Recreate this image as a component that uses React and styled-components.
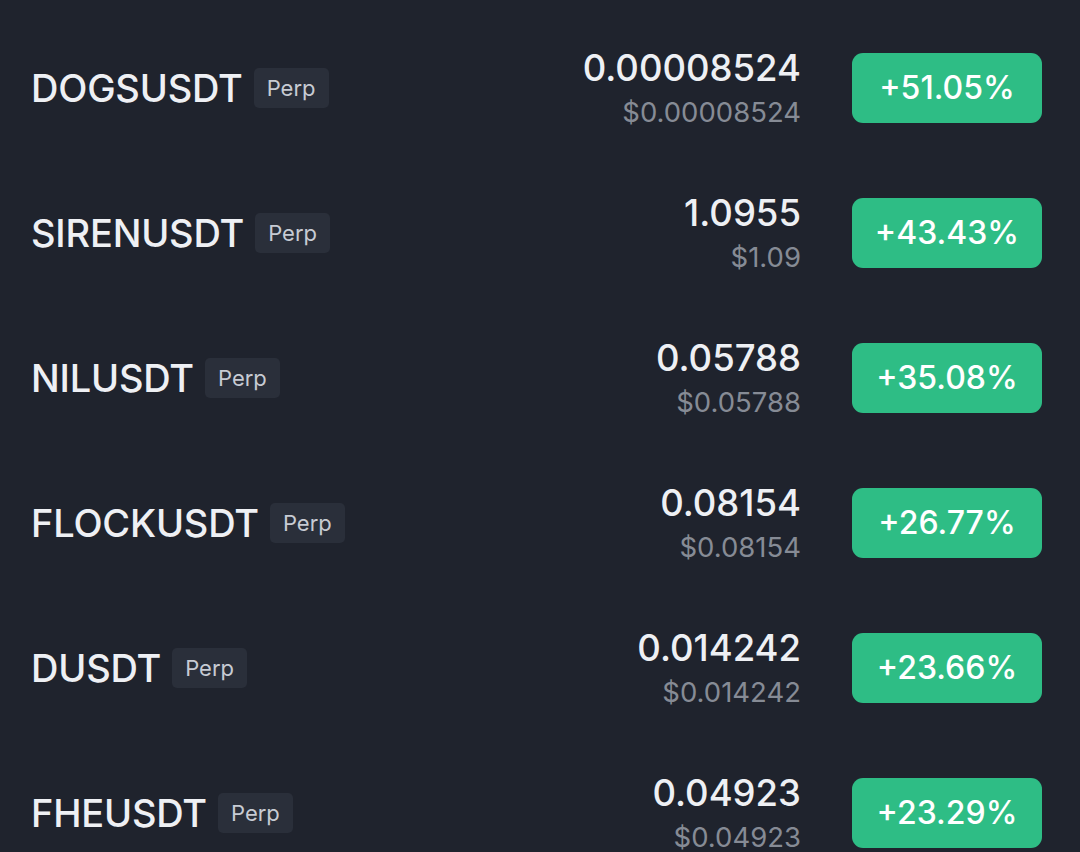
import React from "react";
import styled, { createGlobalStyle } from "styled-components";

const Global = createGlobalStyle`
  html, body { margin: 0; padding: 0; background: #1f232d; }
  body { font-family: Inter, "Open Sans", sans-serif; -webkit-font-smoothing: antialiased; }
`;

const List = styled.div`
  width: 1080px;
  height: 852px;
  overflow: hidden;
  background: #1f232d;
  padding: 15px 38px 0 31px;
  box-sizing: border-box;
  display: flex;
  flex-direction: column;
`;

const Row = styled.div`
  height: 145px;
  flex: none;
  display: flex;
  align-items: center;
`;

const NameCell = styled.div`
  flex: 1;
  display: flex;
  align-items: center;
  gap: 11px;
`;

const Symbol = styled.span`
  font-size: 38px;
  font-weight: 500;
  color: #eef0f4;
  letter-spacing: -0.2px;
`;

const Tag = styled.span`
  background: #2a2f3a;
  color: #c7cbd3;
  font-size: 22px;
  font-weight: 400;
  border-radius: 5px;
  height: 40px;
  padding: 0 13px;
  display: flex;
  align-items: center;
`;

const PriceCell = styled.div`
  display: flex;
  flex-direction: column;
  align-items: flex-end;
  margin-right: 51px;
`;

const Price = styled.span`
  font-size: 36.5px;
  font-weight: 500;
  color: #eef0f4;
  line-height: 44px;
`;

const SubPrice = styled.span`
  font-size: 27.5px;
  color: #868b95;
  line-height: 34px;
  margin-top: 5px;
`;

const Change = styled.div`
  width: 190px;
  height: 70px;
  border-radius: 11px;
  background: ${(p) => (p.$up ? "#2ebd85" : "#f6465d")};
  color: #ffffff;
  font-size: 32px;
  font-weight: 500;
  display: flex;
  align-items: center;
  justify-content: center;
`;

const rows = [
  { s: "DOGSUSDT", p: "0.00008524", u: "$0.00008524", c: "+51.05%" },
  { s: "SIRENUSDT", p: "1.0955", u: "$1.09", c: "+43.43%" },
  { s: "NILUSDT", p: "0.05788", u: "$0.05788", c: "+35.08%" },
  { s: "FLOCKUSDT", p: "0.08154", u: "$0.08154", c: "+26.77%" },
  { s: "DUSDT", p: "0.014242", u: "$0.014242", c: "+23.66%" },
  { s: "FHEUSDT", p: "0.04923", u: "$0.04923", c: "+23.29%" },
];

export default function App() {
  return (
    <>
      <Global />
      <List>
        {rows.map((r) => (
          <Row key={r.s}>
            <NameCell>
              <Symbol>{r.s}</Symbol>
              <Tag>Perp</Tag>
            </NameCell>
            <PriceCell>
              <Price>{r.p}</Price>
              <SubPrice>{r.u}</SubPrice>
            </PriceCell>
            <Change $up>{r.c}</Change>
          </Row>
        ))}
      </List>
    </>
  );
}
